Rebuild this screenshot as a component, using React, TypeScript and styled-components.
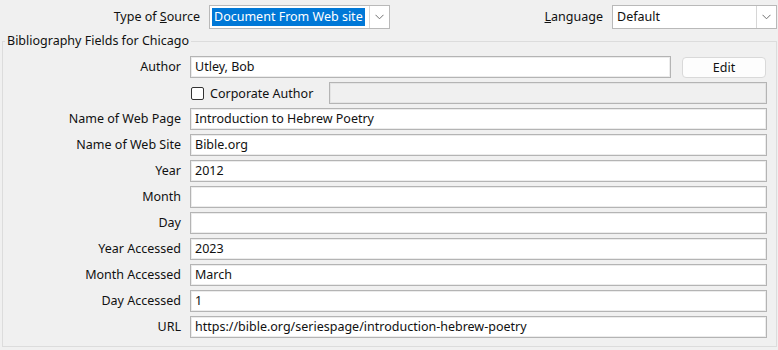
import styled, { createGlobalStyle } from "styled-components";

const GlobalStyle = createGlobalStyle`
  html, body {
    margin: 0;
    padding: 0;
    background: #f0f0f0;
  }
  body {
    font-family: "Noto Sans", "Open Sans", sans-serif;
    font-size: 12.5px;
    color: #111;
  }
`;

const Dialog = styled.div`
  width: 778px;
  height: 350px;
  background: #f0f0f0;
  box-sizing: border-box;
  overflow: hidden;
`;

const TopRow = styled.div`
  height: 33px;
  display: flex;
  align-items: center;
  padding: 0 1px 0 0;
  box-sizing: border-box;
`;

const TopLabel = styled.label<{ $width: number }>`
  width: ${(p) => p.$width}px;
  text-align: right;
  margin-right: 9px;
  white-space: nowrap;
`;

const Spacer = styled.div`
  flex: 1;
`;

const Select = styled.div<{ $width: number }>`
  width: ${(p) => p.$width}px;
  height: 24px;
  box-sizing: border-box;
  display: flex;
  align-items: stretch;
  background: #fff;
  border: 1px solid #b9b9b9;
`;

const SelectValue = styled.div`
  flex: 1;
  display: flex;
  align-items: center;
  padding-left: 2px;
  min-width: 0;
`;

const Highlight = styled.span`
  background: #0078d7;
  color: #fff;
  padding: 1px 2px;
  line-height: 16px;
`;

const PlainValue = styled.span`
  padding: 0 2px;
`;

const Chevron = styled.div`
  width: 19px;
  border-left: 1px solid #d6d6d6;
  display: flex;
  align-items: center;
  justify-content: center;
`;

const Group = styled.fieldset`
  margin: 0 1px 0 2px;
  padding: 7px 9px 0 0;
  border: 1px solid #dcdcdc;
  height: 314px;
  box-sizing: border-box;
  min-width: 0;
`;

const Legend = styled.legend`
  margin-left: 2px;
  padding: 0 2px;
  line-height: 16px;
`;

const Form = styled.div`
  display: grid;
  grid-template-columns: 178px 1fr;
  column-gap: 9px;
  row-gap: 4px;
`;

const FieldLabel = styled.label`
  text-align: right;
  line-height: 22px;
  white-space: nowrap;
`;

const Input = styled.div<{ $disabled?: boolean }>`
  height: 22px;
  box-sizing: border-box;
  border: 1px solid #b4b4b4;
  box-shadow: inset 0 0 0 1px ${(p) => (p.$disabled ? "#e4e4e4" : "#ececec")};
  background: ${(p) => (p.$disabled ? "#f0f0f0" : "#fff")};
  padding: 0 4px;
  line-height: 20px;
  white-space: nowrap;
  overflow: hidden;
  flex: 1;
  min-width: 0;
`;

const InlineRow = styled.div<{ $gap: number }>`
  display: flex;
  align-items: center;
  gap: ${(p) => p.$gap}px;
`;

const Button = styled.button`
  width: 84px;
  height: 21px;
  margin-right: 1px;
  box-sizing: border-box;
  border: 1px solid #d9d9d9;
  border-radius: 4px;
  background: #fdfdfd;
  font: inherit;
  color: #111;
  padding: 0;
`;

const CheckLabel = styled.label`
  display: flex;
  align-items: center;
  gap: 6px;
  width: 138px;
  padding-left: 1px;
  white-space: nowrap;
`;

const CheckBox = styled.span`
  width: 13px;
  height: 13px;
  box-sizing: border-box;
  border: 1px solid #333;
  border-radius: 2px;
  background: #fff;
`;

const ChevronIcon = () => (
  <svg width="9" height="6" viewBox="0 0 9 6">
    <path d="M0.5 0.8 L4.5 4.8 L8.5 0.8" fill="none" stroke="#707070" strokeWidth="1" />
  </svg>
);

const fields: [string, string][] = [
  ["Name of Web Page", "Introduction to Hebrew Poetry"],
  ["Name of Web Site", "Bible.org"],
  ["Year", "2012"],
  ["Month", ""],
  ["Day", ""],
  ["Year Accessed", "2023"],
  ["Month Accessed", "March"],
  ["Day Accessed", "1"],
  ["URL", "https://bible.org/seriespage/introduction-hebrew-poetry"],
];

export default function App() {
  return (
    <Dialog>
      <GlobalStyle />
      <TopRow>
        <TopLabel $width={200}>
          Type of <u>S</u>ource
        </TopLabel>
        <Select $width={181}>
          <SelectValue>
            <Highlight>Document From Web site</Highlight>
          </SelectValue>
          <Chevron>
            <ChevronIcon />
          </Chevron>
        </Select>
        <Spacer />
        <TopLabel $width={70}>
          <u>L</u>anguage
        </TopLabel>
        <Select $width={165}>
          <SelectValue>
            <PlainValue>Default</PlainValue>
          </SelectValue>
          <Chevron>
            <ChevronIcon />
          </Chevron>
        </Select>
      </TopRow>
      <Group>
        <Legend>Bibliography Fields for Chicago</Legend>
        <Form>
          <FieldLabel>Author</FieldLabel>
          <InlineRow $gap={11}>
            <Input>Utley, Bob</Input>
            <Button>Edit</Button>
          </InlineRow>
          <div />
          <InlineRow $gap={0}>
            <CheckLabel>
              <CheckBox />
              Corporate Author
            </CheckLabel>
            <Input $disabled />
          </InlineRow>
          {fields.map(([label, value]) => (
            <>
              <FieldLabel key={label + "-l"}>{label}</FieldLabel>
              <Input key={label + "-v"}>{value}</Input>
            </>
          ))}
        </Form>
      </Group>
    </Dialog>
  );
}
